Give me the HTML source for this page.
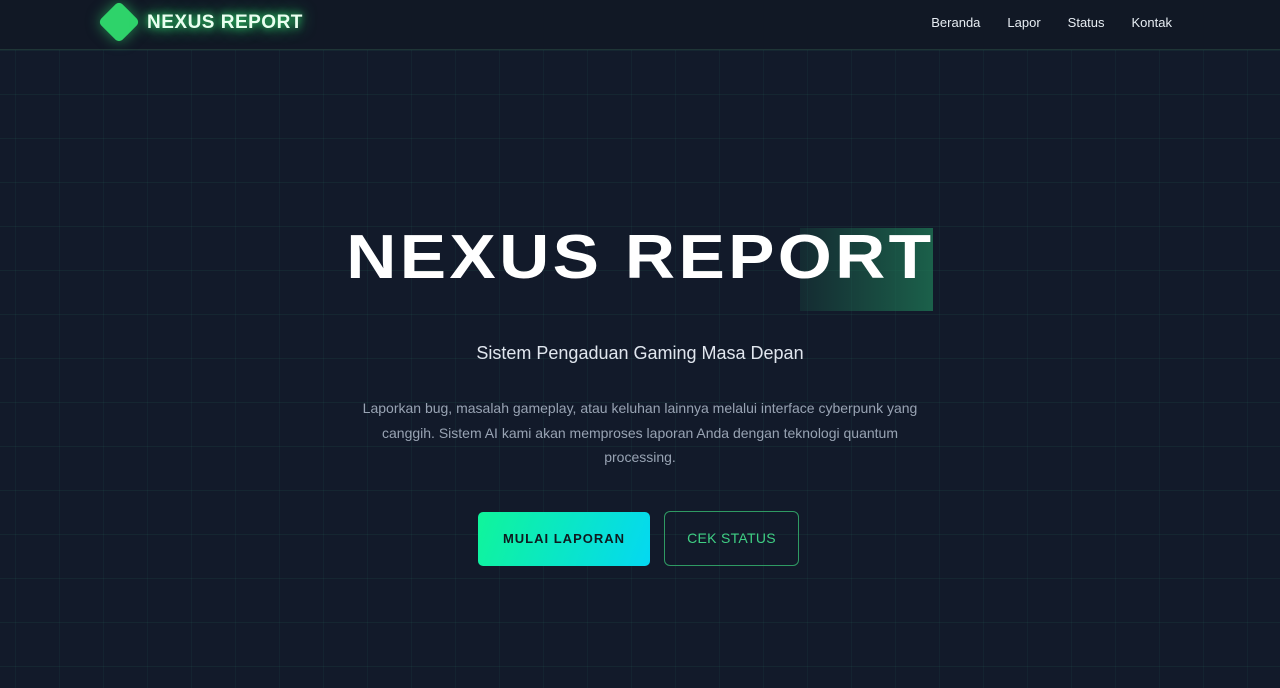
<!DOCTYPE html>
<html><head><meta charset="utf-8"><style>
*{margin:0;padding:0;box-sizing:border-box}
body{width:1280px;height:688px;overflow:hidden;background:#121a2a;font-family:"Liberation Sans",sans-serif;position:relative;
background-image:linear-gradient(rgba(40,120,100,.12) 1px,transparent 1px),linear-gradient(90deg,rgba(40,120,100,.1) 1px,transparent 1px);
background-size:44px 44px;background-position:15px 6px}
header{position:absolute;left:0;top:0;width:1280px;height:50px;background:#111825;border-bottom:1px solid #1f3536}
.logo{position:absolute;left:104px;top:7px;width:30px;height:30px;background:#2ed36a;transform:rotate(45deg);border-radius:5px;box-shadow:0 0 14px rgba(46,211,106,.6)}
.brand{position:absolute;left:147px;top:12px;font-size:19px;font-weight:bold;color:#e9fff0;letter-spacing:.5px;text-shadow:0 0 8px #2ed36a,0 0 16px #2ed36a}
nav{position:absolute;top:15px;right:108px;font-size:13px;color:#e6ecf2}
nav span{margin-left:27px}
.hl{position:absolute;left:800px;top:228px;width:133px;height:83px;background:linear-gradient(90deg,rgba(30,110,80,.2),rgba(30,120,85,.75))}
h1{position:absolute;left:0;width:1280px;top:222px;text-align:center;font-size:62px;font-weight:bold;color:#fff;letter-spacing:3px;line-height:72px;transform:scaleX(1.12);transform-origin:637px 0}
.sub{position:absolute;width:1280px;top:343px;text-align:center;font-size:18px;color:#e0e6ee}
.desc{position:absolute;left:350px;width:580px;top:396px;text-align:center;font-size:14px;line-height:24.5px;color:#98a3b3}
.b1{position:absolute;left:478px;top:512px;width:172px;height:54px;border-radius:5px;background:linear-gradient(110deg,#10f59a,#04d8f2);color:#0e1a1f;font-weight:bold;font-size:13px;letter-spacing:1px;text-align:center;line-height:54px}
.b2{position:absolute;left:664px;top:511px;width:135px;height:55px;border-radius:6px;border:1px solid #2f9a63;color:#3fcf84;font-size:14px;text-align:center;line-height:53px;letter-spacing:.3px}
</style></head><body>
<header><div class="logo"></div><div class="brand">NEXUS REPORT</div>
<nav><span>Beranda</span><span>Lapor</span><span>Status</span><span>Kontak</span></nav></header>
<div class="hl"></div>
<h1>NEXUS REPORT</h1>
<div class="sub">Sistem Pengaduan Gaming Masa Depan</div>
<div class="desc">Laporkan bug, masalah gameplay, atau keluhan lainnya melalui interface cyberpunk yang canggih. Sistem AI kami akan memproses laporan Anda dengan teknologi quantum processing.</div>
<div class="b1">MULAI LAPORAN</div>
<div class="b2">CEK STATUS</div>
</body></html>
